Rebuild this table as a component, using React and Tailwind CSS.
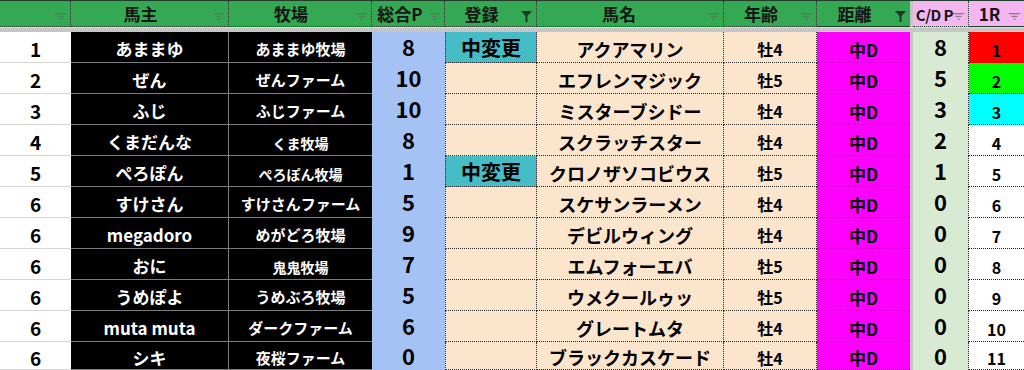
import React from "react";

const rows = [
  { rank: 1, owner: "あままゆ", farm: "あままゆ牧場", total: 8, reg: "中変更", horse: "アクアマリン", age: "牡4", cdp: 8, r1: 1, r1bg: "bg-[#ff0000]" },
  { rank: 2, owner: "ぜん", farm: "ぜんファーム", total: 10, reg: "", horse: "エフレンマジック", age: "牡5", cdp: 5, r1: 2, r1bg: "bg-[#00ff00]" },
  { rank: 3, owner: "ふじ", farm: "ふじファーム", total: 10, reg: "", horse: "ミスターブシドー", age: "牡4", cdp: 3, r1: 3, r1bg: "bg-[#00ffff]" },
  { rank: 4, owner: "くまだんな", farm: "くま牧場", total: 8, reg: "", horse: "スクラッチスター", age: "牡4", cdp: 2, r1: 4, r1bg: "bg-white" },
  { rank: 5, owner: "ぺろぽん", farm: "ぺろぽん牧場", total: 1, reg: "中変更", horse: "クロノザソコビウス", age: "牡5", cdp: 1, r1: 5, r1bg: "bg-white" },
  { rank: 6, owner: "すけさん", farm: "すけさんファーム", total: 5, reg: "", horse: "スケサンラーメン", age: "牡4", cdp: 0, r1: 6, r1bg: "bg-white" },
  { rank: 6, owner: "megadoro", farm: "めがどろ牧場", total: 9, reg: "", horse: "デビルウィング", age: "牡4", cdp: 0, r1: 7, r1bg: "bg-white" },
  { rank: 6, owner: "おに", farm: "鬼鬼牧場", total: 7, reg: "", horse: "エムフォーエバ", age: "牡5", cdp: 0, r1: 8, r1bg: "bg-white" },
  { rank: 6, owner: "うめぽよ", farm: "うめぶろ牧場", total: 5, reg: "", horse: "ウメクールゥッ", age: "牡5", cdp: 0, r1: 9, r1bg: "bg-white" },
  { rank: 6, owner: "muta muta", farm: "ダークファーム", total: 6, reg: "", horse: "グレートムタ", age: "牡4", cdp: 0, r1: 10, r1bg: "bg-white" },
  { rank: 6, owner: "シキ", farm: "夜桜ファーム", total: 0, reg: "", horse: "ブラックカスケード", age: "牡4", cdp: 0, r1: 11, r1bg: "bg-white" },
];

const GRID =
  "grid grid-cols-[71px_158px_143px_73px_92px_187px_93px_93px_3px_56px_55px]";

function SortIcon({ color = "#4f7d5b" }) {
  return (
    <svg width="11" height="7" viewBox="0 0 11 7" className="absolute right-[4px] bottom-[6px]">
      <rect x="0" y="0" width="11" height="1.3" fill={color} />
      <rect x="2.5" y="2.8" width="6" height="1.3" fill={color} />
      <rect x="4.5" y="5.6" width="2" height="1.3" fill={color} />
    </svg>
  );
}

function FilterIcon() {
  return (
    <svg width="11" height="11" viewBox="0 0 11 11" className="absolute right-[4px] bottom-[4px]">
      <polygon points="0,0 11,0 6.5,5 6.5,11 4.5,11 4.5,5" fill="#1d3a26" />
    </svg>
  );
}

function H({ children, icon = "sort", pink = false, last = false, pr = "pr-[18px]" }) {
  return (
    <div
      className={`relative flex h-full items-center justify-center ${pr} text-[17px] font-bold text-[#161616] border-b border-b-[#1f3d28] ${
        pink ? "bg-[#f4b6f1]" : "bg-[#34a853]"
      } ${last ? "" : "border-r border-r-[#1f3d28] border-dotted"}`}
    >
      <span className="leading-none">{children}</span>
      {icon === "sort" && <SortIcon color={pink ? "#8c7b8c" : "#4f7d5b"} />}
      {icon === "filter" && <FilterIcon />}
    </div>
  );
}

export default function App() {
  return (
    <div className="w-[1024px] h-[370px] overflow-hidden bg-white [font-family:'Noto_Sans_CJK_JP','Noto_Sans',sans-serif]">
      {/* header */}
      <div className={`${GRID} h-[27px] border-t border-t-[#1f3d28]`}>
        <H />
        <H>馬主</H>
        <H>牧場</H>
        <H pr="pr-[16px]">総合P</H>
        <H icon="filter">登録</H>
        <H pr="pr-[22px]">馬名</H>
        <H>年齢</H>
        <H icon="filter" last>距離</H>
        <div className="bg-[#c4c4c4]" />
        <H pink pr="pr-[12px]">
          <span className="text-[15px] tracking-[-0.5px]">C/D P</span>
        </H>
        <H pink last pr="pr-[14px]">1R</H>
      </div>
      {/* band under header */}
      <div className="h-[5px] bg-[#c6c6c6] border-t border-t-[#dcdcdc]" />
      {/* body */}
      {rows.map((r, i) => (
        <div key={i} className={`${GRID} ${i === rows.length - 1 ? "h-[28px]" : "h-[31px]"}`}>
          <div className="flex items-center justify-center pt-[3px] bg-white border-b border-b-[#d6d6d6] text-[19px] font-bold leading-none">
            {r.rank}
          </div>
          <div className="flex items-center justify-center pt-[3px] bg-black text-white border-b border-r border-[#7d7d7d] text-[17px] font-bold leading-none">
            {r.owner}
          </div>
          <div
            className={`flex items-center justify-center bg-black text-white border-b border-[#7d7d7d] font-bold leading-none ${
              r.farm.length <= 4 || r.rank === 5 ? "text-[14px] pt-[6px]" : "text-[15px] pt-[3px]"
            }`}
          >
            {r.farm}
          </div>
          <div className="flex items-center justify-center pb-[3px] bg-[#a4c2f4] text-[22px] font-bold leading-none">
            {r.total}
          </div>
          <div
            className={`flex items-center justify-center pt-[1px] border-b border-l border-r border-dotted border-[#2a2a2a] text-[20px] font-bold leading-none ${
              r.reg ? "bg-[#46bdc6]" : "bg-[#fce5cd]"
            }`}
          >
            {r.reg}
          </div>
          <div className="flex items-center justify-center pt-[3px] bg-[#fce5cd] border-b border-r border-dotted border-[#2a2a2a] text-[18px] font-bold leading-none whitespace-nowrap overflow-hidden">
            {r.horse}
          </div>
          <div className="flex items-center justify-center pt-[4px] bg-[#fce5cd] border-b border-r border-dotted border-[#2a2a2a] text-[16px] font-bold leading-none">
            {r.age}
          </div>
          <div className="flex items-center justify-center pt-[4px] bg-[#ff00ff] border-b border-dotted border-[#2a2a2a] text-[17px] font-bold leading-none">
            中D
          </div>
          <div className="bg-[#c4c4c4]" />
          <div className="flex items-center justify-center pb-[3px] bg-[#d9ead3] border-r border-dotted border-[#2a2a2a] text-[22px] font-bold leading-none">
            {r.cdp}
          </div>
          <div className={`flex items-center justify-center pt-[5px] ${r.r1bg} border-b border-dotted border-[#2a2a2a] text-[16px] font-bold leading-none`}>
            {r.r1}
          </div>
        </div>
      ))}
    </div>
  );
}
